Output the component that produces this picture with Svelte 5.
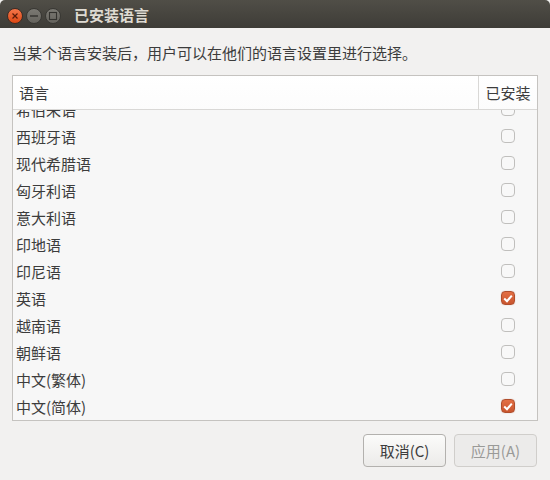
<script>
  const languages = [
    { name: '希伯来语', installed: false },
    { name: '西班牙语', installed: false },
    { name: '现代希腊语', installed: false },
    { name: '匈牙利语', installed: false },
    { name: '意大利语', installed: false },
    { name: '印地语', installed: false },
    { name: '印尼语', installed: false },
    { name: '英语', installed: true },
    { name: '越南语', installed: false },
    { name: '朝鲜语', installed: false },
    { name: '中文(繁体)', installed: false },
    { name: '中文(简体)', installed: true }
  ];
</script>

<div class="window">
  <header class="titlebar">
    <div class="controls">
      <span class="ctl close">
        <svg width="8" height="8" viewBox="0 0 8 8"><path d="M1.5 1.5l5 5M6.5 1.5l-5 5" stroke="#5a1a08" stroke-width="1.2" fill="none" /></svg>
      </span>
      <span class="ctl">
        <svg width="10" height="8" viewBox="0 0 10 8"><path d="M1 4h8" stroke="#33322e" stroke-width="1.4" fill="none" /></svg>
      </span>
      <span class="ctl">
        <svg width="10" height="10" viewBox="0 0 10 10"><rect x="1.5" y="1.5" width="7" height="7" stroke="#33322e" stroke-width="1.1" fill="none" /></svg>
      </span>
    </div>
    <span class="title">已安装语言</span>
  </header>

  <main class="content">
    <p class="hint">当某个语言安装后，用户可以在他们的语言设置里进行选择。</p>

    <div class="list">
      <div class="head">
        <span class="head-name">语言</span>
        <span class="head-check">已安装</span>
      </div>
      <div class="viewport">
        <div class="rows">
          {#each languages as lang}
            <div class="row">
              <span class="name">{lang.name}</span>
              <span class="check-cell">
                <span class="box" class:on={lang.installed}>
                  {#if lang.installed}
                    <svg width="13" height="13" viewBox="0 0 13 13"><path d="M2.4 6.6l3 2.9 5.2-6.2" stroke="#fff" stroke-width="2.2" fill="none" /></svg>
                  {/if}
                </span>
              </span>
            </div>
          {/each}
        </div>
      </div>
    </div>

    <div class="actions">
      <button class="btn">取消(C)</button>
      <button class="btn" disabled>应用(A)</button>
    </div>
  </main>
</div>

<style>
  :global(body) {
    margin: 0;
    background: #f2f1f0;
  }
  .window {
    width: 550px;
    height: 480px;
    display: flex;
    flex-direction: column;
    background: #f2f1f0;
    font-family: "Noto Sans CJK SC", "Liberation Sans", sans-serif;
    font-size: 15px;
    color: #3c3c3c;
    overflow: hidden;
  }
  .titlebar {
    height: 28px;
    flex: none;
    display: flex;
    align-items: center;
    padding-left: 7px;
    background: linear-gradient(#504e47, #3e3c37);
    border-radius: 5px 5px 0 0;
  }
  .controls {
    display: flex;
    gap: 3px;
    margin-top: 3px;
  }
  .ctl {
    width: 16px;
    height: 16px;
    box-sizing: border-box;
    border-radius: 50%;
    display: flex;
    align-items: center;
    justify-content: center;
    background: linear-gradient(#7b7973, #65635d);
    border: 1px solid #393834;
  }
  .close {
    background: linear-gradient(#f4764a, #dd4814);
    border-color: #3f2c24;
  }
  .title {
    margin-left: 13px;
    margin-top: 1px;
    font-weight: 700;
    color: #dfdbd2;
  }
  .content {
    flex: 1;
    display: flex;
    flex-direction: column;
    padding: 0 12px;
    min-height: 0;
  }
  .hint {
    margin: 0;
    height: 47px;
    line-height: 50px;
    white-space: nowrap;
  }
  .list {
    width: 526px;
    height: 346px;
    box-sizing: border-box;
    border: 1px solid #c5c3c0;
    background: #f7f7f7;
    display: flex;
    flex-direction: column;
  }
  .head {
    height: 34px;
    flex: none;
    box-sizing: border-box;
    display: flex;
    background: linear-gradient(#ffffff, #fcfcfc);
    border-bottom: 1px solid #d9d8d6;
  }
  .head-name {
    flex: 1;
    padding-left: 6px;
    line-height: 33px;
  }
  .head-check {
    width: 59px;
    box-sizing: border-box;
    border-left: 1px solid #d9d8d6;
    text-align: center;
    line-height: 33px;
  }
  .viewport {
    flex: 1;
    min-height: 0;
    overflow: hidden;
  }
  .rows {
    margin-top: -14px;
  }
  .row {
    height: 27px;
    display: flex;
    align-items: center;
  }
  .name {
    flex: 1;
    padding-left: 3px;
  }
  .check-cell {
    width: 59px;
    display: flex;
    justify-content: center;
  }
  .box {
    width: 14px;
    height: 14px;
    margin-bottom: 1px;
    box-sizing: border-box;
    border: 1px solid #c0bfbd;
    border-radius: 4px;
    background: #f8f8f8;
    display: flex;
    align-items: center;
    justify-content: center;
  }
  .box.on {
    background: linear-gradient(#e36f44, #c9552e);
    border-color: #b04e2c;
    box-shadow: 0 0 1px rgba(176, 78, 44, 0.5);
  }
  .actions {
    display: flex;
    justify-content: flex-end;
    gap: 8px;
    margin-top: 13px;
    margin-right: 1px;
  }
  .btn {
    width: 83px;
    height: 33px;
    box-sizing: border-box;
    padding: 0;
    border: 1px solid #b3b1ae;
    border-radius: 4px;
    background: linear-gradient(#fbfbfa, #ecebe9);
    color: #3c3c3c;
    font: inherit;
  }
  .btn:disabled {
    border-color: #d0cecb;
    background: #ecebea;
    color: #9a9a98;
  }
</style>
